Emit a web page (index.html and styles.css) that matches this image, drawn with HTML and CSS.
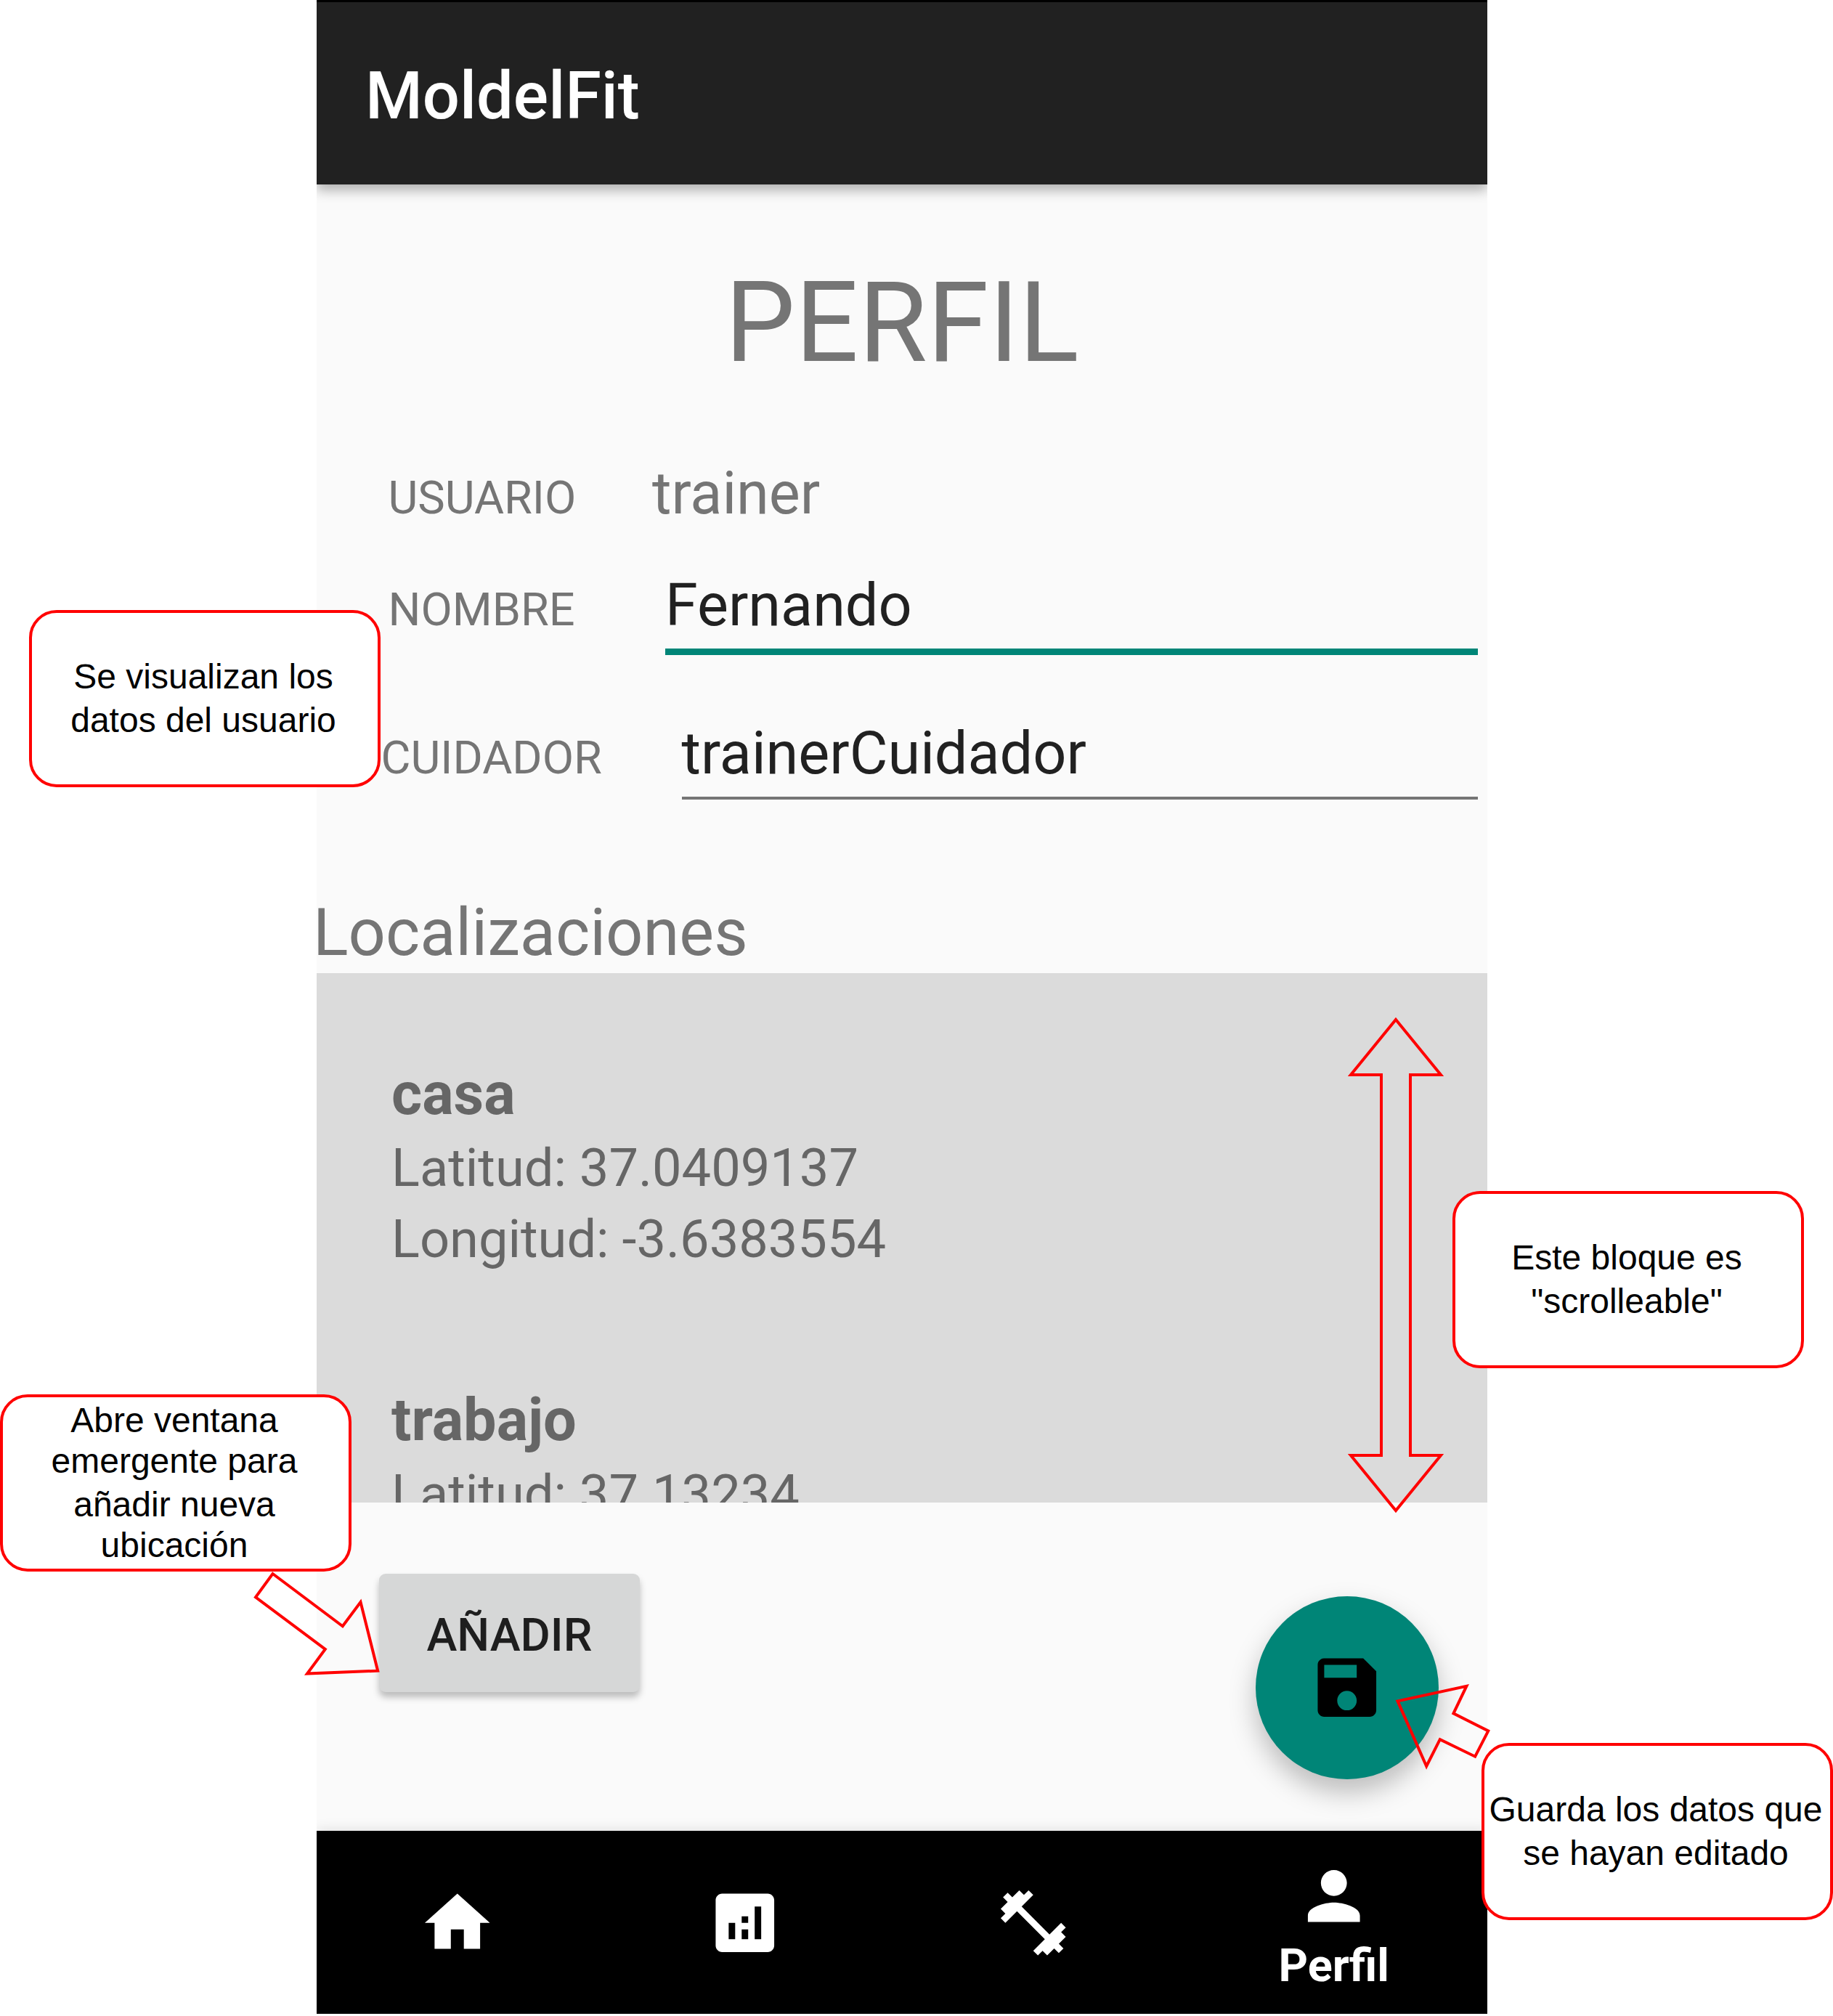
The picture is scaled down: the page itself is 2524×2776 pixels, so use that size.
FILE: index.html
```html
<!DOCTYPE html>
<html lang="es">
<head>
<meta charset="utf-8">
<title>MoldelFit - Perfil</title>
<link rel="stylesheet" href="styles.css">
</head>
<body>
<div class="board">
  <main class="phone">
    <header class="appbar"><h1 class="appbar-title">MoldelFit</h1></header>
    <h2 class="page-title">PERFIL</h2>
    <section class="form">
      <div class="row row-user"><span class="label">USUARIO</span><span class="value">trainer</span></div>
      <div class="row row-name"><span class="label">NOMBRE</span><span class="field field-active">Fernando</span></div>
      <div class="row row-carer"><span class="label">CUIDADOR</span><span class="field">trainerCuidador</span></div>
    </section>
    <h3 class="list-title">Localizaciones</h3>
    <ul class="places">
      <li class="place"><strong class="place-name">casa</strong><span class="coord">Latitud: 37.0409137</span><span class="coord">Longitud: -3.6383554</span></li>
      <li class="place"><strong class="place-name">trabajo</strong><span class="coord">Latitud: 37.13234</span></li>
    </ul>
    <div class="actions">
      <button class="add" type="button">AÑADIR</button>
      <button class="fab" type="button" aria-label="Guardar">
        <svg class="icon" viewBox="0 0 24 24"><path d="M17,3H5C3.89,3 3,3.9 3,5v14c0,1.1 0.89,2 2,2h14c1.1,0 2,-0.9 2,-2V7l-4,-4zM12,19c-1.66,0 -3,-1.34 -3,-3s1.34,-3 3,-3 3,1.34 3,3 -1.34,3 -3,3zM15,9H5V5h10v4z"/></svg>
      </button>
    </div>
    <nav class="tabs">
      <a class="tab"><svg class="icon" viewBox="0 0 24 24"><path d="M10,20v-6h4v6h5v-8h3L12,3 2,12h3v8z"/></svg></a>
      <a class="tab"><svg class="icon" viewBox="0 0 24 24"><path d="M19,3H5C3.9,3 3,3.9 3,5v14c0,1.1 0.9,2 2,2h14c1.1,0 2,-0.9 2,-2V5C21,3.9 20.1,3 19,3zM9,17H7v-5h2V17zM13,17h-2v-3h2V17zM13,12h-2v-2h2V12zM17,17h-2V7h2V17z"/></svg></a>
      <a class="tab"><svg class="icon" viewBox="0 0 24 24"><path d="M20.57,14.86L22,13.43 20.57,12 17,15.57 8.43,7 12,3.43 10.57,2 9.14,3.43 7.71,2 5.57,4.14 4.14,2.71 2.71,4.14l1.43,1.43L2,7.71l1.43,1.43L2,10.57 3.43,12 7,8.43 15.57,17 12,20.57 13.43,22l1.43,-1.43L16.29,22l2.14,-2.14 1.43,1.43 1.43,-1.43 -1.43,-1.43L22,16.29z"/></svg></a>
      <a class="tab tab-active"><svg class="icon" viewBox="0 0 24 24"><path d="M12,12c2.21,0 4,-1.79 4,-4s-1.79,-4 -4,-4 -4,1.79 -4,4 1.79,4 4,4zM12,14c-2.67,0 -8,1.34 -8,4v2h16v-2c0,-2.66 -5.33,-4 -8,-4z"/></svg><span class="tab-label">Perfil</span></a>
    </nav>
  </main>

  <svg class="arrows" viewBox="0 0 2524 2776">
    <path d="M1922,1404L1984,1480H1942V2004H1984L1922,2080L1860,2004H1902V1480H1860Z"/>
    <path d="M375.5,2167L471.8,2239.3L496.5,2206L520.2,2300.7L423,2304.6L447.8,2271L352,2199.3Z"/>
    <path d="M1924.5,2342.4L2019.4,2321.7L2001.4,2359.4L2049.3,2383.4L2031.2,2418.7L1982.8,2395.1L1964.2,2432Z"/>
  </svg>
  <p class="note note-data">Se visualizan los<br>datos del usuario</p>
  <p class="note note-scroll">Este bloque es<br>"scrolleable"</p>
  <p class="note note-add"><span>Abre ventana</span><span>emergente para</span><span class="spaced">añadir nueva</span><span>ubicación</span></p>
  <p class="note note-save">Guarda los datos que<br>se hayan editado</p>
</div>
</body>
</html>
```
FILE: styles.css
```css
* { box-sizing: border-box; margin: 0; padding: 0; }

body { background: #fff; font-family: Roboto, sans-serif; }

.board { position: relative; width: 2524px; height: 2776px; overflow: hidden; }

.phone {
  display: flex;
  flex-direction: column;
  width: 1612px;
  height: 2773px;
  margin-left: 436px;
  background: #fafafa;
  color: #757575;
}

/* top bar */
.appbar {
  height: 254px;
  padding: 7px 0 0 67px;
  display: flex;
  align-items: center;
  background: #212121;
  border-top: 3px solid #000;
  box-shadow: 0 8px 16px rgba(0, 0, 0, .3);
  clip-path: inset(0 0 -40px 0);
}
.appbar-title { font-size: 90.2px; font-weight: 500; color: #fff; }

.page-title {
  margin-top: 101px;
  font-size: 153.3px;
  font-weight: 400;
  line-height: 180px;
  text-align: center;
}

/* profile fields */
.form { margin-top: 95px; }
.row { display: flex; align-items: baseline; padding-right: 13px; }
.label { flex: none; font-size: 63px; }
.value, .field { font-size: 81px; line-height: 100px; }
.field { flex: 1; color: #212121; height: 113px; border-bottom: 4px solid #757575; }
.field-active { height: 118px; border-bottom: 9px solid #008577; }
.row-user { height: 100px; padding-left: 98.5px; }
.row-user .label { width: 363.5px; }
.row-name { margin-top: 54px; padding-left: 98.5px; }
.row-name .label { width: 381.5px; }
.row-carer { margin-top: 86px; padding-left: 88.5px; }
.row-carer .label { width: 414px; }

/* saved places */
.list-title {
  margin: 130px 0 3px -5px;
  font-size: 90.2px;
  font-weight: 400;
  line-height: 106px;
}
.places {
  flex: none;
  height: 729px;
  overflow: hidden;
  list-style: none;
  background: #dbdbdb;
  color: #666;
}
.place { height: 449px; padding: 116px 0 0 103px; display: flex; flex-direction: column; }
.place-name { margin-bottom: 3px; font-size: 81px; line-height: 101px; font-weight: 700; }
.coord { font-size: 72.2px; line-height: 98px; }

.actions {
  flex: 1;
  display: flex;
  justify-content: space-between;
  align-items: flex-start;
  padding: 98px 67px 0 86px;
}
.add {
  width: 359px;
  height: 163px;
  padding-top: 4px;
  border: 0;
  border-radius: 9px;
  background: #d6d7d7;
  box-shadow: 0 7px 10px rgba(0, 0, 0, .25);
  font: 500 63.2px Roboto, sans-serif;
  color: #1e1e1e;
}
.fab {
  display: flex;
  align-items: center;
  justify-content: center;
  width: 252px;
  height: 252px;
  margin-top: 31px;
  border: 0;
  border-radius: 50%;
  background: #008577;
  box-shadow: 0 18px 36px rgba(0, 0, 0, .25);
  color: #000;
}
.icon { display: block; width: 107.5px; height: 107.5px; fill: currentColor; }

/* bottom navigation */
.tabs {
  flex: none;
  display: grid;
  grid-template-columns: 396.5px 396.5px 396.5px 432px;
  justify-content: center;
  height: 252px;
  background: #000;
  box-shadow: 0 -2px 16px rgba(0, 0, 0, .1);
  clip-path: inset(-24px 0 0 0);
  color: #fff;
}
.tab { display: flex; flex-direction: column; align-items: center; justify-content: center; padding-top: 1px; }
.tab-active { justify-content: flex-start; padding-top: 36px; }
.tab-label { font-size: 63px; font-weight: 700; line-height: 74px; margin-top: 5px; }

/* annotations */
.arrows { position: absolute; left: 0; top: 0; width: 2524px; height: 2776px; fill: none; stroke: #f00; stroke-width: 4; }
.note {
  position: absolute;
  display: flex;
  flex-direction: column;
  justify-content: center;
  width: 484px;
  height: 244px;
  padding-right: 4px;
  background: #fff;
  border: 4px solid #f00;
  border-radius: 38px;
  font: 48px/60px "Liberation Sans", Arial, sans-serif;
  color: #000;
  text-align: center;
  white-space: nowrap;
}
.note-data { left: 40px; top: 840px; }
.note-scroll { left: 2000px; top: 1640px; }
.note-add { left: 0; top: 1920px; line-height: 56px; }
.note-add .spaced { margin-top: 4px; }
.note-save { left: 2040px; top: 2400px; }
```
